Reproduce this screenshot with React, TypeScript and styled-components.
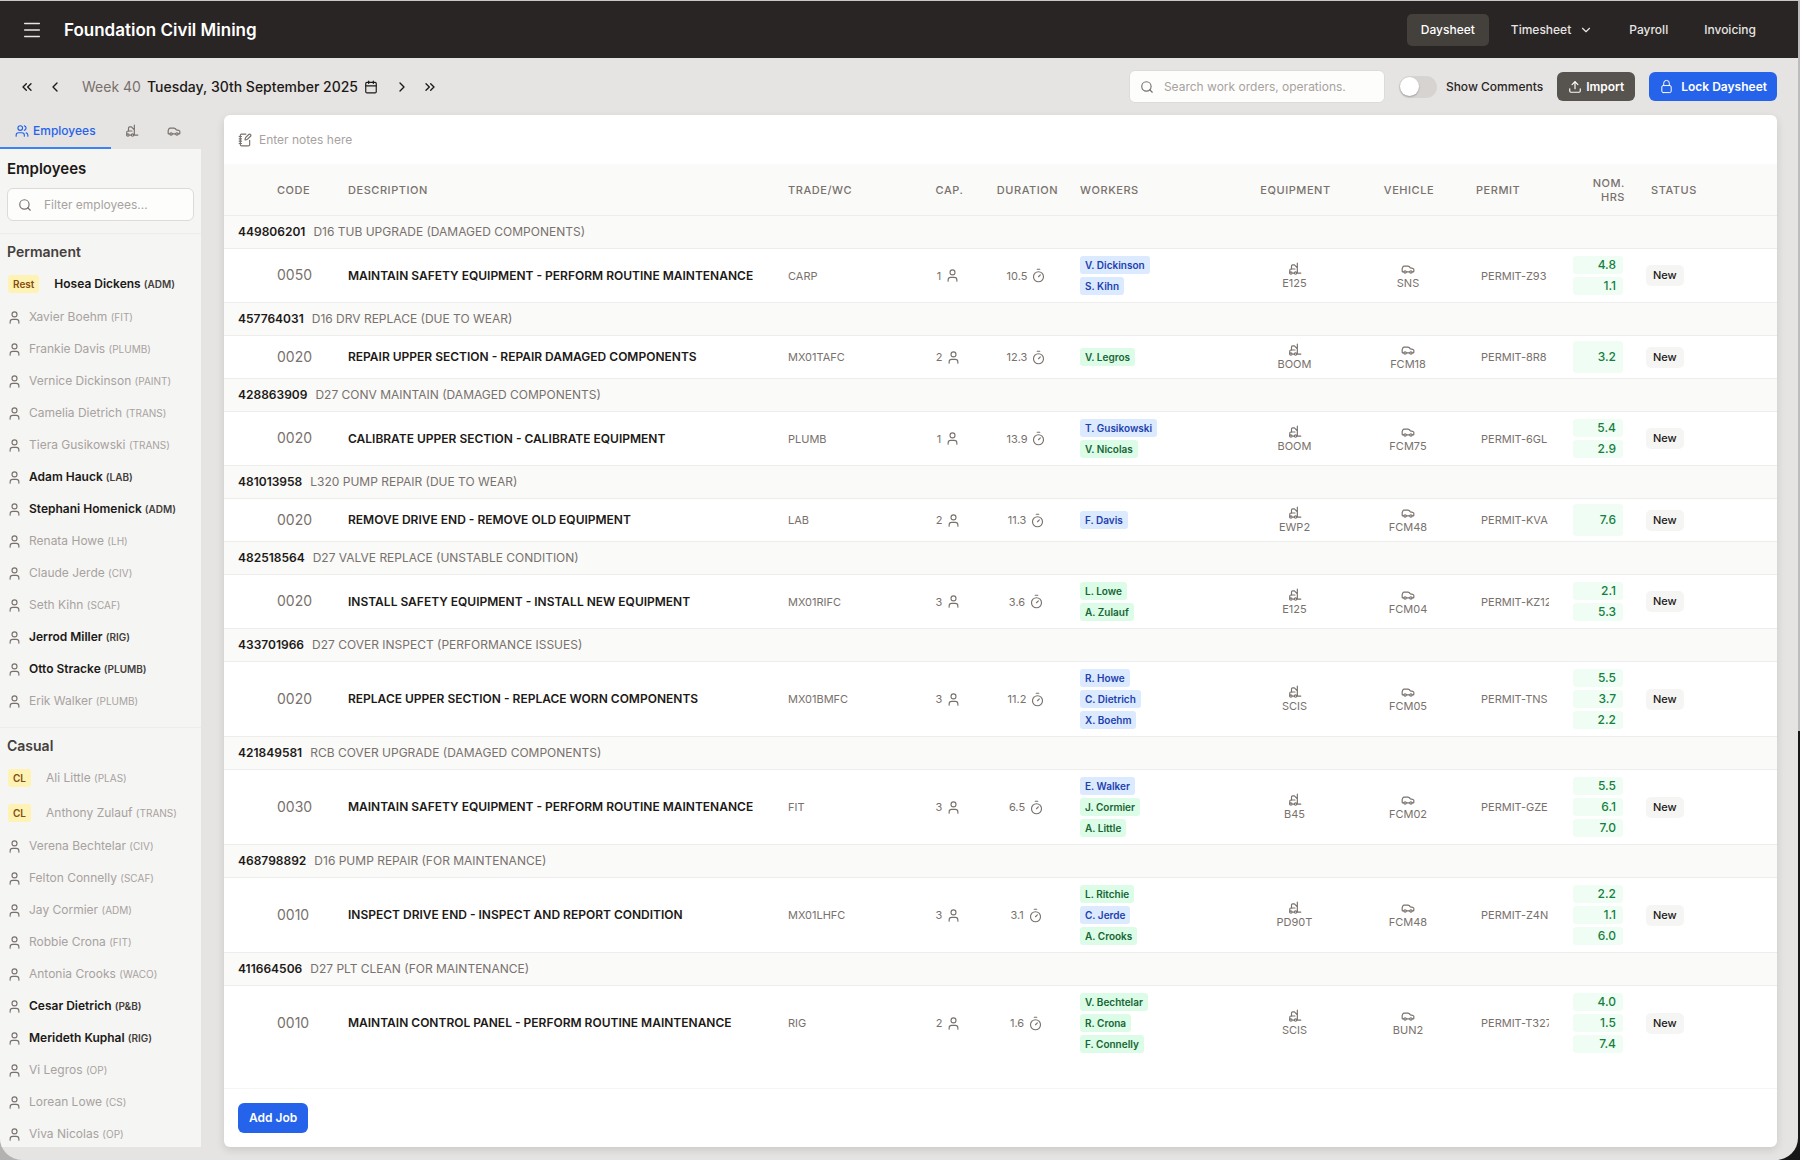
import React from "react";
import styled, { createGlobalStyle } from "styled-components";
import {
  Calendar,
  Car,
  ChevronDown,
  ChevronLeft,
  ChevronRight,
  ChevronsLeft,
  ChevronsRight,
  Forklift,
  Menu,
  NotebookPen,
  Search,
  Timer,
  Upload,
  User,
  Users,
} from "lucide-react";

const c = {
  ink: "#1c1917",
  text: "#44403c",
  soft: "#78716c",
  faint: "#a8a29e",
  line: "#ededec",
  page: "#e5e4e2",
  panel: "#f5f5f4",
  stripe: "#fafaf9",
  blue: "#2563eb",
};

const GlobalStyle = createGlobalStyle`
  *, *::before, *::after { box-sizing: border-box; }
  body {
    margin: 0;
    font-family: Inter, "Liberation Sans", sans-serif;
    font-size: 12px;
    line-height: 16px;
    color: ${c.ink};
  }
  button, input { font: inherit; color: inherit; }
  button { border: 0; padding: 0; background: none; cursor: pointer; }
  svg { display: block; flex: none; }
`;

const Desktop = styled.div`
  height: 100vh;
  padding: 1px 2px 0 0;
  background:
    linear-gradient(#c9c8c6, #c9c8c6) top / 100% 1px no-repeat,
    linear-gradient(#bdbcbb 63%, #171717 63%) right / 2px 100% no-repeat,
    linear-gradient(90deg, #b4b2b0 50%, #171717 50%);
`;

const Window = styled.div`
  height: 100%;
  display: flex;
  flex-direction: column;
  overflow: hidden;
  border-radius: 0 0 22px 22px;
  background: ${c.page};
`;

const TopBar = styled.header`
  display: flex;
  align-items: center;
  justify-content: space-between;
  height: 57px;
  flex: none;
  padding: 0 28px 0 21px;
  background: #292524;
  color: #e7e5e4;
`;

const Brand = styled.div`
  display: flex;
  align-items: center;
  gap: 21px;
`;

const BrandName = styled.h1`
  margin: 0;
  font-size: 17px;
  line-height: 24px;
  font-weight: 600;
  color: #fff;
`;

const IconButton = styled.button`
  display: flex;
  align-items: center;
  justify-content: center;
`;

const Nav = styled.nav`
  display: flex;
  align-items: center;
  gap: 8px;
`;

const NavLink = styled.a<{ $active?: boolean }>`
  display: flex;
  align-items: center;
  gap: 8px;
  height: 32px;
  padding: 0 14px;
  border-radius: 5px;
  font-weight: 500;
  text-decoration: none;
  color: ${(p) => (p.$active ? "#fff" : "#e7e5e4")};
  background: ${(p) => (p.$active ? "#44403c" : "transparent")};
`;

const ToolBar = styled.div`
  display: flex;
  align-items: center;
  justify-content: space-between;
  height: 57px;
  flex: none;
  padding: 0 21px 0 19px;
`;

const DateNav = styled.div`
  display: flex;
  align-items: center;
  gap: 12px;
`;

const DateLabel = styled.button`
  display: flex;
  align-items: center;
  gap: 6px;
  margin: 0 4px 0 7px;
  font-size: 14px;
  line-height: 20px;
  font-weight: 500;

  span {
    font-weight: 400;
    color: ${c.soft};
  }
`;

const Actions = styled.div`
  display: flex;
  align-items: center;
  gap: 14px;
`;

const SearchBox = styled.label<{ $wide?: boolean }>`
  display: flex;
  align-items: center;
  gap: ${(p) => (p.$wide ? "10px" : "12px")};
  height: 33px;
  width: ${(p) => (p.$wide ? "256px" : "100%")};
  padding: 0 10px;
  border: 1px solid #dddbd9;
  border-radius: 6px;
  background: #fdfdfc;
  color: ${c.soft};

  input {
    flex: 1;
    min-width: 0;
    border: 0;
    padding: 0;
    outline: 0;
    background: none;
    color: ${c.ink};
  }
  input::placeholder { color: ${c.faint}; }
`;

const Switch = styled.label`
  display: flex;
  align-items: center;
  gap: 9px;
  font-weight: 500;
  color: #292524;

  input {
    appearance: none;
    display: flex;
    align-items: center;
    width: 38px;
    height: 22px;
    margin: 0;
    padding: 0 1px;
    border-radius: 11px;
    background: #d6d3d1;
    cursor: pointer;
  }
  input::before {
    content: "";
    width: 19px;
    height: 19px;
    border-radius: 50%;
    background: #fff;
    box-shadow: 0 1px 2px rgba(0, 0, 0, 0.25);
  }
  input:checked { justify-content: flex-end; background: ${c.blue}; }
`;

const SolidButton = styled.button<{ $tone?: "dark" }>`
  display: flex;
  align-items: center;
  gap: ${(p) => (p.$tone ? "4px" : "7px")};
  height: 29px;
  padding: 0 ${(p) => (p.$tone ? "11px" : "10px")};
  border-radius: 6px;
  font-weight: 600;
  color: #fff;
  background: ${(p) => (p.$tone ? "#57534e" : c.blue)};
`;

const Body = styled.div`
  display: flex;
  gap: 23px;
  flex: 1;
  min-height: 0;
  padding: 0 21px 13px 0;
`;

const Side = styled.aside`
  display: flex;
  flex-direction: column;
  width: 201px;
  flex: none;
  min-height: 0;
`;

const Tabs = styled.div`
  display: flex;
  height: 34px;
  flex: none;
`;

const Tab = styled.button<{ $active?: boolean }>`
  display: flex;
  align-items: center;
  gap: 4px;
  padding: 0 ${(p) => (p.$active ? "15px" : "14px")};
  font-weight: 500;
  color: ${(p) => (p.$active ? c.blue : c.soft)};
  border-bottom: 2px solid ${(p) => (p.$active ? "#3b82f6" : "transparent")};
`;

const SidePanel = styled.div`
  flex: 1;
  min-height: 0;
  overflow-y: auto;
  scrollbar-width: none;
  background: ${c.panel};
`;

const SideHead = styled.div`
  display: flex;
  flex-direction: column;
  gap: 9px;
  padding: 9px 7px 12px;

  h2 {
    margin: 0;
    font-size: 15px;
    line-height: 21px;
    font-weight: 600;
  }
`;

const Section = styled.section`
  padding-bottom: 10px;
  border-top: 1px solid ${c.line};

  h3 {
    margin: 0;
    padding: 8px 7px 5px;
    font-size: 14px;
    line-height: 19px;
    font-weight: 600;
    color: ${c.text};
  }
  ul {
    margin: 0;
    padding: 0;
    list-style: none;
  }
`;

const Person = styled.li<{ $free?: boolean; $tagged?: boolean }>`
  display: flex;
  align-items: center;
  gap: ${(p) => (p.$tagged ? "15px" : "7px")};
  height: ${(p) => (p.$tagged ? "35px" : "32px")};
  padding: 0 ${(p) => (p.$tagged ? "8px" : "7px")};
  white-space: nowrap;
  font-weight: ${(p) => (p.$free ? 600 : 400)};
  color: ${(p) => (p.$free ? c.ink : c.faint)};

  svg { color: ${c.soft}; }
  small {
    font-size: 10px;
    font-weight: ${(p) => (p.$free ? 600 : 400)};
    color: ${(p) => (p.$free ? c.text : c.faint)};
  }
`;

const Tag = styled.span`
  padding: 1px 5px;
  border-radius: 3px;
  font-size: 10px;
  font-weight: 600;
  color: #854d0e;
  background: #fef3b4;
`;

const Card = styled.main`
  display: flex;
  flex-direction: column;
  flex: 1;
  min-width: 0;
  overflow: hidden;
  border-radius: 6px;
  background: #fff;
  box-shadow: 0 3px 8px rgba(0, 0, 0, 0.12);
`;

const Notes = styled.label`
  display: flex;
  align-items: center;
  gap: 7px;
  height: 49px;
  flex: none;
  padding: 0 14px;
  color: ${c.soft};

  input {
    flex: 1;
    border: 0;
    padding: 0;
    outline: 0;
    background: none;
  }
  input::placeholder { color: ${c.faint}; }
`;

const TableArea = styled.div`
  flex: 1;
  min-height: 0;
  overflow: auto;
  scrollbar-width: none;
`;

const Table = styled.table`
  width: 100%;
  table-layout: fixed;
  border-collapse: separate;
  border-spacing: 0;
`;

const Col = styled.col<{ $w?: number }>`
  width: ${(p) => (p.$w ? p.$w + "px" : "auto")};
`;

type Align = "left" | "center" | "right";

const HeadCell = styled.th<{ $align?: Align; $indent?: number }>`
  height: 52px;
  padding: 0 6px 0 ${(p) => p.$indent ?? 8}px;
  border-bottom: 1px solid ${c.line};
  background: ${c.stripe};
  font-size: 11px;
  line-height: 14px;
  font-weight: 500;
  letter-spacing: 0.05em;
  text-align: ${(p) => p.$align ?? "left"};
  text-transform: uppercase;
  color: ${c.soft};
`;

const GroupCell = styled.th`
  height: 33px;
  padding: 0 14px;
  border-bottom: 1px solid ${c.line};
  background: ${c.stripe};
  text-align: left;
  font-weight: 400;
  color: ${c.soft};

  strong {
    margin-right: 8px;
    font-weight: 600;
    color: ${c.ink};
  }
`;

const JobRow = styled.tr`
  td { border-bottom: 1px solid ${c.line}; }
  &:last-child td { border-bottom: 0; }
`;

const Cell = styled.td<{ $align?: Align; $indent?: number }>`
  height: 43px;
  padding: 7px 8px 7px ${(p) => p.$indent ?? 8}px;
  font-size: 11px;
  line-height: 14px;
  text-align: ${(p) => p.$align ?? "left"};
  vertical-align: middle;
  color: ${c.soft};
`;

const Code = styled.span`
  font-size: 14px;
  color: ${c.soft};
`;

const Title = styled.span`
  font-size: 12px;
  font-weight: 600;
  color: ${c.ink};
`;

const Count = styled.span`
  display: flex;
  align-items: center;
  justify-content: center;
  gap: 4px;
`;

const Stack = styled.div<{ $align?: "center" | "flex-start" | "stretch" }>`
  display: flex;
  flex-direction: column;
  align-items: ${(p) => p.$align ?? "flex-start"};
  gap: 3px;
`;

const Asset = styled.div`
  display: flex;
  flex-direction: column;
  align-items: center;
  font-size: 11px;
  line-height: 14px;
`;

const Worker = styled.span<{ $kind: "b" | "g" }>`
  height: 18px;
  padding: 0 5px;
  border-radius: 3px;
  font-size: 10px;
  line-height: 18px;
  font-weight: 600;
  color: ${(p) => (p.$kind === "b" ? "#1e40af" : "#166534")};
  background: ${(p) => (p.$kind === "b" ? "#dbeafe" : "#dcfce7")};
`;

const Permit = styled.input`
  display: block;
  width: 78px;
  height: 20px;
  padding: 0 5px;
  border: 0;
  background: none;
  font-size: 11px;
`;

const Hours = styled.span<{ $tall?: boolean }>`
  display: block;
  padding: 0 7px;
  border-radius: 3px;
  font-size: 12px;
  line-height: ${(p) => (p.$tall ? "32px" : "18px")};
  margin: ${(p) => (p.$tall ? "-3px 0" : "0")};
  font-weight: 500;
  text-align: right;
  color: #15803d;
  background: #f0fdf4;
`;

const Status = styled.span`
  display: inline-block;
  padding: 0 7px;
  border-radius: 5px;
  font-size: 11px;
  line-height: 21px;
  font-weight: 500;
  color: ${c.ink};
  background: ${c.panel};
`;

const CardFooter = styled.footer`
  display: flex;
  align-items: center;
  height: 59px;
  flex: none;
  padding: 0 14px;
  border-top: 1px solid #f5f5f4;
`;

const AddButton = styled(SolidButton)`
  height: 30px;
  padding: 0 11px;
`;

const LockIcon = () => (
  <svg width="15" height="15" viewBox="0 0 24 24" fill="none" stroke="currentColor" strokeWidth="1.6" strokeLinecap="round" strokeLinejoin="round">
    <path d="M16.5 10.5V6.75a4.5 4.5 0 1 0-9 0v3.75m-.75 11.25h10.5a2.25 2.25 0 0 0 2.25-2.25v-6.75a2.25 2.25 0 0 0-2.25-2.25H6.75a2.25 2.25 0 0 0-2.25 2.25v6.75a2.25 2.25 0 0 0 2.25 2.25Z" />
  </svg>
);

interface Employee {
  name: string;
  trade: string;
  free?: boolean;
  tag?: string;
}

const permanent: Employee[] = [
  { name: "Hosea Dickens", trade: "ADM", free: true, tag: "Rest" },
  { name: "Xavier Boehm", trade: "FIT" },
  { name: "Frankie Davis", trade: "PLUMB" },
  { name: "Vernice Dickinson", trade: "PAINT" },
  { name: "Camelia Dietrich", trade: "TRANS" },
  { name: "Tiera Gusikowski", trade: "TRANS" },
  { name: "Adam Hauck", trade: "LAB", free: true },
  { name: "Stephani Homenick", trade: "ADM", free: true },
  { name: "Renata Howe", trade: "LH" },
  { name: "Claude Jerde", trade: "CIV" },
  { name: "Seth Kihn", trade: "SCAF" },
  { name: "Jerrod Miller", trade: "RIG", free: true },
  { name: "Otto Stracke", trade: "PLUMB", free: true },
  { name: "Erik Walker", trade: "PLUMB" },
];

const casual: Employee[] = [
  { name: "Ali Little", trade: "PLAS", tag: "CL" },
  { name: "Anthony Zulauf", trade: "TRANS", tag: "CL" },
  { name: "Verena Bechtelar", trade: "CIV" },
  { name: "Felton Connelly", trade: "SCAF" },
  { name: "Jay Cormier", trade: "ADM" },
  { name: "Robbie Crona", trade: "FIT" },
  { name: "Antonia Crooks", trade: "WACO" },
  { name: "Cesar Dietrich", trade: "P&B", free: true },
  { name: "Merideth Kuphal", trade: "RIG", free: true },
  { name: "Vi Legros", trade: "OP" },
  { name: "Lorean Lowe", trade: "CS" },
  { name: "Viva Nicolas", trade: "OP" },
];

interface Job {
  order: string;
  summary: string;
  code: string;
  title: string;
  trade: string;
  cap: number;
  duration: string;
  workers: ["b" | "g", string, string][];
  equipment: string;
  vehicle: string;
  permit: string;
}

const jobs: Job[] = [
  { order: "449806201", summary: "D16 TUB UPGRADE (DAMAGED COMPONENTS)", code: "0050", title: "MAINTAIN SAFETY EQUIPMENT - PERFORM ROUTINE MAINTENANCE", trade: "CARP", cap: 1, duration: "10.5", workers: [["b", "V. Dickinson", "4.8"], ["b", "S. Kihn", "1.1"]], equipment: "E125", vehicle: "SNS", permit: "PERMIT-Z93" },
  { order: "457764031", summary: "D16 DRV REPLACE (DUE TO WEAR)", code: "0020", title: "REPAIR UPPER SECTION - REPAIR DAMAGED COMPONENTS", trade: "MX01TAFC", cap: 2, duration: "12.3", workers: [["g", "V. Legros", "3.2"]], equipment: "BOOM", vehicle: "FCM18", permit: "PERMIT-8R8" },
  { order: "428863909", summary: "D27 CONV MAINTAIN (DAMAGED COMPONENTS)", code: "0020", title: "CALIBRATE UPPER SECTION - CALIBRATE EQUIPMENT", trade: "PLUMB", cap: 1, duration: "13.9", workers: [["b", "T. Gusikowski", "5.4"], ["g", "V. Nicolas", "2.9"]], equipment: "BOOM", vehicle: "FCM75", permit: "PERMIT-6GL" },
  { order: "481013958", summary: "L320 PUMP REPAIR (DUE TO WEAR)", code: "0020", title: "REMOVE DRIVE END - REMOVE OLD EQUIPMENT", trade: "LAB", cap: 2, duration: "11.3", workers: [["b", "F. Davis", "7.6"]], equipment: "EWP2", vehicle: "FCM48", permit: "PERMIT-KVA" },
  { order: "482518564", summary: "D27 VALVE REPLACE (UNSTABLE CONDITION)", code: "0020", title: "INSTALL SAFETY EQUIPMENT - INSTALL NEW EQUIPMENT", trade: "MX01RIFC", cap: 3, duration: "3.6", workers: [["g", "L. Lowe", "2.1"], ["g", "A. Zulauf", "5.3"]], equipment: "E125", vehicle: "FCM04", permit: "PERMIT-KZ12" },
  { order: "433701966", summary: "D27 COVER INSPECT (PERFORMANCE ISSUES)", code: "0020", title: "REPLACE UPPER SECTION - REPLACE WORN COMPONENTS", trade: "MX01BMFC", cap: 3, duration: "11.2", workers: [["b", "R. Howe", "5.5"], ["b", "C. Dietrich", "3.7"], ["b", "X. Boehm", "2.2"]], equipment: "SCIS", vehicle: "FCM05", permit: "PERMIT-TNS" },
  { order: "421849581", summary: "RCB COVER UPGRADE (DAMAGED COMPONENTS)", code: "0030", title: "MAINTAIN SAFETY EQUIPMENT - PERFORM ROUTINE MAINTENANCE", trade: "FIT", cap: 3, duration: "6.5", workers: [["b", "E. Walker", "5.5"], ["g", "J. Cormier", "6.1"], ["g", "A. Little", "7.0"]], equipment: "B45", vehicle: "FCM02", permit: "PERMIT-GZE" },
  { order: "468798892", summary: "D16 PUMP REPAIR (FOR MAINTENANCE)", code: "0010", title: "INSPECT DRIVE END - INSPECT AND REPORT CONDITION", trade: "MX01LHFC", cap: 3, duration: "3.1", workers: [["g", "L. Ritchie", "2.2"], ["b", "C. Jerde", "1.1"], ["g", "A. Crooks", "6.0"]], equipment: "PD90T", vehicle: "FCM48", permit: "PERMIT-Z4N" },
  { order: "411664506", summary: "D27 PLT CLEAN (FOR MAINTENANCE)", code: "0010", title: "MAINTAIN CONTROL PANEL - PERFORM ROUTINE MAINTENANCE", trade: "RIG", cap: 2, duration: "1.6", workers: [["g", "V. Bechtelar", "4.0"], ["g", "R. Crona", "1.5"], ["g", "F. Connelly", "7.4"]], equipment: "SCIS", vehicle: "BUN2", permit: "PERMIT-T327" },
];

const PeopleSection = ({ title, people }: { title: string; people: Employee[] }) => (
  <Section>
    <h3>{title}</h3>
    <ul>
      {people.map((p) => (
        <Person key={p.name} $free={p.free} $tagged={!!p.tag}>
          {p.tag ? <Tag>{p.tag}</Tag> : <User size={15} strokeWidth={1.8} />}
          <span>
            {p.name} <small>({p.trade})</small>
          </span>
        </Person>
      ))}
    </ul>
  </Section>
);

const JobRows = ({ job }: { job: Job }) => (
  <>
    <tr>
      <GroupCell colSpan={11} scope="rowgroup">
        <strong>{job.order}</strong>
        {job.summary}
      </GroupCell>
    </tr>
    <JobRow>
      <Cell $indent={53}><Code>{job.code}</Code></Cell>
      <Cell><Title>{job.title}</Title></Cell>
      <Cell>{job.trade}</Cell>
      <Cell><Count>{job.cap}<User size={15} strokeWidth={1.8} /></Count></Cell>
      <Cell><Count>{job.duration}<Timer size={15} strokeWidth={1.8} /></Count></Cell>
      <Cell>
        <Stack>
          {job.workers.map(([kind, name]) => (
            <Worker key={name} $kind={kind}>{name}</Worker>
          ))}
        </Stack>
      </Cell>
      <Cell><Asset><Forklift size={14} />{job.equipment}</Asset></Cell>
      <Cell><Asset><Car size={14} />{job.vehicle}</Asset></Cell>
      <Cell $indent={9}>
        <Permit aria-label={`Permit for ${job.order}`} defaultValue={job.permit} />
      </Cell>
      <Cell>
        <Stack $align="stretch">
          {job.workers.map(([, name, hours]) => (
            <Hours key={name} $tall={job.workers.length === 1}>{hours}</Hours>
          ))}
        </Stack>
      </Cell>
      <Cell $indent={15}><Status>New</Status></Cell>
    </JobRow>
  </>
);

export default function App() {
  return (
    <>
      <GlobalStyle />
      <Desktop>
        <Window>
          <TopBar>
            <Brand>
              <IconButton aria-label="Menu"><Menu size={22} strokeWidth={1.6} /></IconButton>
              <BrandName>Foundation Civil Mining</BrandName>
            </Brand>
            <Nav>
              <NavLink href="#" $active>Daysheet</NavLink>
              <NavLink href="#">Timesheet<ChevronDown size={14} /></NavLink>
              <NavLink href="#">Payroll</NavLink>
              <NavLink href="#">Invoicing</NavLink>
            </Nav>
          </TopBar>
          <ToolBar>
            <DateNav>
              <IconButton aria-label="Previous week"><ChevronsLeft size={16} /></IconButton>
              <IconButton aria-label="Previous day"><ChevronLeft size={16} /></IconButton>
              <DateLabel>
                <span>Week 40</span>
                Tuesday, 30th September 2025
                <Calendar size={14} />
              </DateLabel>
              <IconButton aria-label="Next day"><ChevronRight size={16} /></IconButton>
              <IconButton aria-label="Next week"><ChevronsRight size={16} /></IconButton>
            </DateNav>
            <Actions>
              <SearchBox $wide>
                <Search size={14} />
                <input aria-label="Search" placeholder="Search work orders, operations." />
              </SearchBox>
              <Switch>
                <input type="checkbox" role="switch" />
                Show Comments
              </Switch>
              <SolidButton $tone="dark"><Upload size={14} />Import</SolidButton>
              <SolidButton><LockIcon />Lock Daysheet</SolidButton>
            </Actions>
          </ToolBar>
          <Body>
            <Side>
              <Tabs role="tablist">
                <Tab role="tab" aria-selected $active><Users size={14} />Employees</Tab>
                <Tab role="tab" aria-label="Equipment"><Forklift size={14} /></Tab>
                <Tab role="tab" aria-label="Vehicles"><Car size={14} /></Tab>
              </Tabs>
              <SidePanel>
                <SideHead>
                  <h2>Employees</h2>
                  <SearchBox>
                    <Search size={14} />
                    <input aria-label="Filter employees" placeholder="Filter employees..." />
                  </SearchBox>
                </SideHead>
                <PeopleSection title="Permanent" people={permanent} />
                <PeopleSection title="Casual" people={casual} />
              </SidePanel>
            </Side>
            <Card>
              <Notes>
                <NotebookPen size={14} />
                <input aria-label="Notes" placeholder="Enter notes here" />
              </Notes>
              <TableArea>
                <Table>
                  <colgroup>
                    <Col $w={116} />
                    <Col />
                    <Col $w={136} />
                    <Col $w={65} />
                    <Col $w={91} />
                    <Col $w={168} />
                    <Col $w={109} />
                    <Col $w={118} />
                    <Col $w={98} />
                    <Col $w={66} />
                    <Col $w={146} />
                  </colgroup>
                  <thead>
                    <tr>
                      <HeadCell $indent={53}>Code</HeadCell>
                      <HeadCell>Description</HeadCell>
                      <HeadCell>Trade/WC</HeadCell>
                      <HeadCell $align="center">Cap.</HeadCell>
                      <HeadCell $align="center">Duration</HeadCell>
                      <HeadCell>Workers</HeadCell>
                      <HeadCell $align="center">Equipment</HeadCell>
                      <HeadCell $align="center">Vehicle</HeadCell>
                      <HeadCell $indent={9}>Permit</HeadCell>
                      <HeadCell $align="right">Nom. Hrs</HeadCell>
                      <HeadCell $indent={20}>Status</HeadCell>
                    </tr>
                  </thead>
                  <tbody>
                    {jobs.map((job) => (
                      <JobRows key={job.order} job={job} />
                    ))}
                  </tbody>
                </Table>
              </TableArea>
              <CardFooter>
                <AddButton>Add Job</AddButton>
              </CardFooter>
            </Card>
          </Body>
        </Window>
      </Desktop>
    </>
  );
}
